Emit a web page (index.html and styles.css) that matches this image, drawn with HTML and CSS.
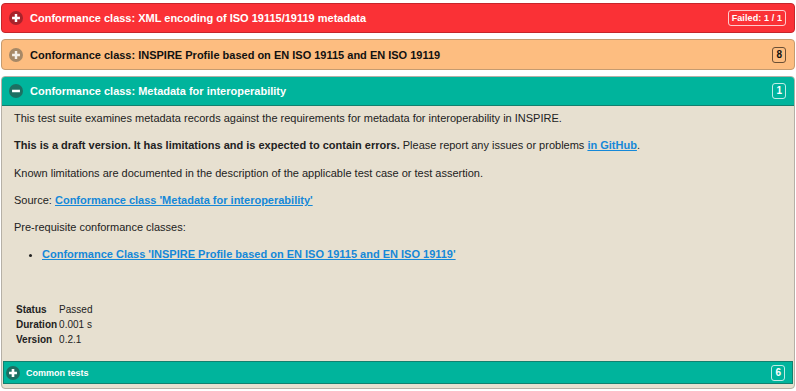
FILE: index.html
```
<!DOCTYPE html>
<html>
<head>
<meta charset="utf-8">
<link rel="stylesheet" href="styles.css">
</head>
<body>
<div class="panel red">
  <div class="head">
    <span class="ico"><svg viewBox="0 0 16 16" width="14" height="14"><circle cx="8" cy="8" r="8" fill="#a8232b"/><path d="M8 3.5v9M3.5 8h9" stroke="#fff" stroke-width="2.8"/></svg></span>
    <span class="title">Conformance class: XML encoding of ISO 19115/19119 metadata</span>
    <span class="badge light wide">Failed: 1 / 1</span>
  </div>
</div>
<div class="panel orange">
  <div class="head">
    <span class="ico"><svg viewBox="0 0 16 16" width="14" height="14"><circle cx="8" cy="8" r="8" fill="#a68866"/><path d="M8 3.5v9M3.5 8h9" stroke="#f4eee6" stroke-width="2.8"/></svg></span>
    <span class="title dark">Conformance class: INSPIRE Profile based on EN ISO 19115 and EN ISO 19119</span>
    <span class="badge darkb">8</span>
  </div>
</div>
<div class="panel teal">
  <div class="head">
    <span class="ico"><svg viewBox="0 0 16 16" width="14" height="14"><circle cx="8" cy="8" r="8" fill="#1d6f62"/><path d="M3.5 8h9" stroke="#fff" stroke-width="2.8"/></svg></span>
    <span class="title">Conformance class: Metadata for interoperability</span>
    <span class="badge light">1</span>
  </div>
  <div class="body">
    <p>This test suite examines metadata records against the requirements for metadata for interoperability in INSPIRE.</p>
    <p><b>This is a draft version. It has limitations and is expected to contain errors.</b> Please report any issues or problems <a href="#">in GitHub</a>.</p>
    <p>Known limitations are documented in the description of the applicable test case or test assertion.</p>
    <p>Source: <a href="#">Conformance class 'Metadata for interoperability'</a></p>
    <p>Pre-requisite conformance classes:</p>
    <ul>
      <li><a href="#">Conformance Class 'INSPIRE Profile based on EN ISO 19115 and EN ISO 19119'</a></li>
    </ul>
    <table class="info">
      <tr><th>Status</th><td>Passed</td></tr>
      <tr><th>Duration</th><td>0.001 s</td></tr>
      <tr><th>Version</th><td>0.2.1</td></tr>
    </table>
    <div class="sub">
      <span class="ico small"><svg viewBox="0 0 16 16" width="14" height="14"><circle cx="8" cy="8" r="8" fill="#1d6f62"/><path d="M8 3.5v9M3.5 8h9" stroke="#fff" stroke-width="3"/></svg></span>
      <span class="subtitle">Common tests</span>
      <span class="badge light">6</span>
    </div>
  </div>
</div>
</body>
</html>
```
FILE: styles.css
```
html, body { margin: 0; padding: 0; background: #fff; }
body { font-family: "Liberation Sans", Arial, sans-serif; font-size: 11px; color: #222; padding: 3px 1px 0 1px; }
.panel { border: 1px solid; border-radius: 4px; margin-bottom: 6px; overflow: hidden; }
.head { height: 28px; display: flex; align-items: center; padding: 0 8px 0 7px; }
.orange .head { height: 29px; }
.ico { display: flex; width: 14px; height: 14px; margin-right: 7px; }
.ico.small { margin-right: 6px; }
.title { flex: 1; font-weight: bold; font-size: 11px; color: #fff; }
.title.dark { color: #111; }
.badge { font-weight: bold; font-size: 10px; border: 1px solid; border-radius: 3px; padding: 1px 3px; line-height: 12px; }
.badge.wide { font-size: 9px; letter-spacing: 0.1px; }
.badge.light { color: #fff; border-color: rgba(255,255,255,0.75); }
.badge.darkb { color: #111; border-color: #6a4f35; }
.red { background: #fa3136; border-color: #c5262b; }
.orange { background: #fdbd80; border-color: #c59b70; }
.teal { background: #e7e0d0; border-color: #b5b0a6; }
.teal > .head { background: #00b49c; border-bottom: 1px solid #12806f; }
.body { padding: 4px 0 4px 0; }
.body p { margin: 0 0 11.3px 0; padding: 0 12px; line-height: 16px; }
.body a { color: #1588d8; font-weight: bold; }
.body ul { margin: 0; padding: 0 0 0 40px; line-height: 16px; }
.info { margin: 40px 0 0 14px; border-collapse: collapse; font-size: 10px; }
.info th { text-align: left; padding: 0 2px 0 0; font-weight: bold; line-height: 15px; }
.info td { padding: 0; line-height: 15px; }
.sub { margin: 14px 1px 0 1px; height: 21px; background: #00b49c; border: 1px solid #12806f; display: flex; align-items: center; padding: 0 7px 0 2px; }
.subtitle { flex: 1; font-weight: bold; font-size: 9px; color: #fff; }
```
